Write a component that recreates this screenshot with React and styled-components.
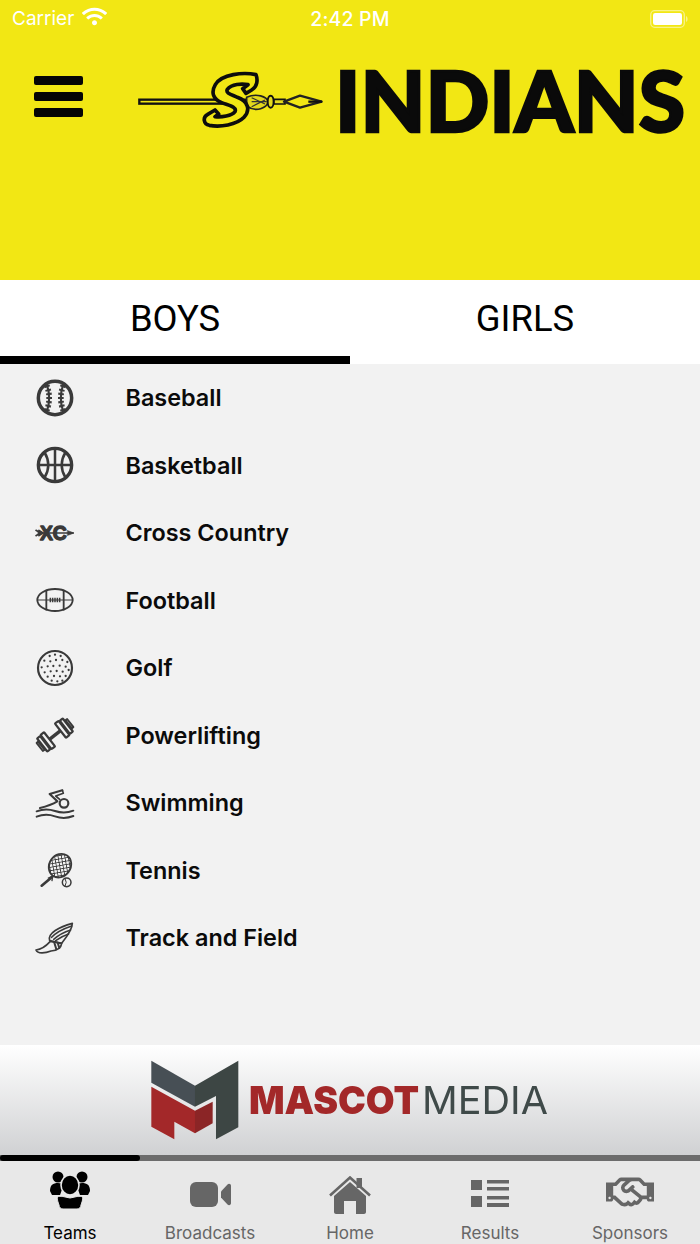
import React from "react";
import styled, { createGlobalStyle } from "styled-components";
import { FaRegHandshake, FaWifi } from "react-icons/fa";

const GlobalStyle = createGlobalStyle`
  html, body { margin: 0; padding: 0; background: #f2f2f2; }
  body { font-family: Inter, "Liberation Sans", sans-serif; }
`;

const INK = "#3a3a3a";

/* list icons are drawn on a 114 unit square centred on 0,0 */
function SportSvg({ children }) {
  return (
    <svg width="38" height="38" viewBox="-57 -57 114 114" fill="none" stroke={INK} strokeLinecap="round" strokeLinejoin="round">
      {children}
    </svg>
  );
}

const BaseballIcon = () => (
  <SportSvg>
    <circle r="50" strokeWidth="10.500" />
    <path d="M-25 -42Q-10 0 -25 42M25 -42Q10 0 25 42" strokeWidth="6.500" />
    <path d="M-25 -38Q-10 0 -25 38M25 -38Q10 0 25 38" strokeWidth="17" strokeLinecap="butt" strokeDasharray="6 6" />
  </SportSvg>
);

const BasketballIcon = () => (
  <SportSvg>
    <circle r="50" strokeWidth="10" />
    <path d="M-50 0H50M0 -50V50M-32 -39Q-8 0 -32 39M32 -39Q8 0 32 39" strokeWidth="7.500" />
  </SportSvg>
);

const CrossCountryIcon = () => (
  <SportSvg>
    <path d="M-50 0H54" strokeWidth="5" />
    <path d="M-57 -8L-44 0L-57 8M-48 -8L-36 0L-48 8" strokeWidth="5" />
    <path d="M38 -7L57 0L38 7Z" fill={INK} strokeWidth="2" />
    <text x="-5" y="21" textAnchor="middle" fontFamily="Liberation Sans, sans-serif" fontWeight="700" fontSize="58" fill={INK} stroke={INK} strokeWidth="4">XC</text>
  </SportSvg>
);

const FootballIcon = () => (
  <SportSvg>
    <ellipse rx="53" ry="33" strokeWidth="5.500" />
    <path d="M-26 -29V29M26 -29V29" strokeWidth="5.500" />
    <path d="M-53 0H53" strokeWidth="3.500" />
    <path d="M-14 -7V7M-7 -7V7M0 -7V7M7 -7V7M14 -7V7" strokeWidth="4.500" strokeLinecap="butt" />
  </SportSvg>
);

const golfDots = [
  [-16, -36], [0, -40], [17, -36], [-32, -22], [-14, -20], [3, -24], [22, -24], [37, -18],
  [-40, -2], [-22, -5], [-5, -6], [14, -7], [32, -4], [-31, 13], [-13, 10], [5, 9], [23, 11], [41, 6],
  [-22, 26], [-3, 24], [15, 25], [32, 24], [-10, 38], [7, 40], [22, 38],
];

const GolfIcon = () => (
  <SportSvg>
    <circle r="51" strokeWidth="6.500" />
    {golfDots.map(([x, y]) => (
      <circle key={`${x}-${y}`} cx={x} cy={y} r="3.400" fill={INK} stroke="none" />
    ))}
  </SportSvg>
);

const PowerliftingIcon = () => (
  <SportSvg>
    <g transform="rotate(-38) scale(1.040)">
      <rect x="-26" y="-5" width="52" height="10" fill={INK} stroke="none" />
      {[-1, 1].map((side) => (
        <g key={side} transform={`scale(${side} 1)`}>
          <rect x="20" y="-26" width="13" height="52" rx="2" fill="#f2f2f2" strokeWidth="6.500" />
          <rect x="36" y="-24" width="11" height="48" rx="2" fill="#f2f2f2" strokeWidth="6.500" />
          <rect x="50" y="-15" width="6" height="30" rx="1" fill="#f2f2f2" strokeWidth="5.500" />
        </g>
      ))}
    </g>
  </SportSvg>
);

const SwimmingIcon = () => (
  <SportSvg>
    <circle cx="27" cy="1" r="13" strokeWidth="6.500" />
    <path d="M-45 15C-25 10 -8 4 7 -5L-16 -27L22 -38" strokeWidth="6.500" />
    <path d="M22 -38L25 -29L2 -21L14 -11" strokeWidth="5" />
    <path d="M-55 25C-35 17 -20 17 0 24S35 31 55 23M-55 41C-35 33 -20 33 0 40S35 47 55 39" strokeWidth="6" />
  </SportSvg>
);

const TennisIcon = () => (
  <SportSvg>
    <defs>
      <pattern id="racketWeave" width="10" height="10" patternUnits="userSpaceOnUse" patternTransform="rotate(45)">
        <path d="M0 0H10M0 0V10" stroke={INK} strokeWidth="5" />
      </pattern>
    </defs>
    <ellipse cx="15" cy="-13" rx="32" ry="37" transform="rotate(35 15 -13)" fill="url(#racketWeave)" strokeWidth="5.500" />
    <path d="M-8 20L-40 47" strokeWidth="8" />
    <path d="M-7 18L-20 24M-7 18L-9 32" strokeWidth="4" />
    <circle cx="35" cy="37" r="13" strokeWidth="4.500" />
    <path d="M30 25Q38 37 30 49" strokeWidth="3" />
  </SportSvg>
);

const TrackIcon = () => (
  <SportSvg>
    <path d="M-57 36C-40 34 -25 22 -14 10L20 16C18 32 2 38 -12 39C-30 46 -52 48 -57 36Z" strokeWidth="5" />
    <path d="M-16 8C-24 -14 14 -34 52 -44C52 -26 36 -4 20 16Z" strokeWidth="5" />
    <path d="M-10 -2C6 -20 26 -28 50 -36M-4 4C12 -10 28 -18 47 -24M2 8C16 -2 28 -8 41 -12" strokeWidth="4.500" />
    <path d="M-2 14L4 34M8 14L13 30" strokeWidth="6" />
  </SportSvg>
);

const boysTeams = [
  { name: "Baseball", Icon: BaseballIcon },
  { name: "Basketball", Icon: BasketballIcon },
  { name: "Cross Country", Icon: CrossCountryIcon },
  { name: "Football", Icon: FootballIcon },
  { name: "Golf", Icon: GolfIcon },
  { name: "Powerlifting", Icon: PowerliftingIcon },
  { name: "Swimming", Icon: SwimmingIcon },
  { name: "Tennis", Icon: TennisIcon },
  { name: "Track and Field", Icon: TrackIcon },
];

const TeamsGlyph = () => (
  <svg width="40" height="39" viewBox="0 0 40 39" fill="currentColor">
    <circle cx="8" cy="7" r="5.500" />
    <circle cx="32" cy="7" r="5.500" />
    <path d="M0 21C0 15 3 13 8 13L14 14L10 25L2 25Z" />
    <path d="M40 21C40 15 37 13 32 13L26 14L30 25L38 25Z" />
    <ellipse cx="20" cy="15" rx="9" ry="10" stroke="#e8e8e8" strokeWidth="1.600" />
    <path d="M9 35C5 24 9 27 13 26.500L20 28L27 26.500C31 27 35 24 31 35C31 37.500 29 39 27 39H13C11 39 9 37.500 9 35Z" stroke="#e8e8e8" strokeWidth="1" />
  </svg>
);

const VideoGlyph = () => (
  <svg width="41" height="25" viewBox="0 0 41 25" fill="currentColor">
    <rect x="0" y="0" width="28" height="25" rx="6" />
    <path d="M31 9.500L37.500 2.500C39 1.200 41 2 41 4V21C41 23 39 23.800 37.500 22.500L31 15.500Z" />
  </svg>
);

const HomeGlyph = () => (
  <svg width="42" height="38" viewBox="0 0 42 38" fill="currentColor">
    <path d="M27.500 2H33V12H27.500Z" />
    <path d="M1 19.500L21 1.500L41 19.500" fill="none" stroke="currentColor" strokeWidth="2.600" />
    <path d="M5 20L21 6L37 20V36C37 37 36 38 35 38H27V25H15V38H7C6 38 5 37 5 36Z" />
  </svg>
);

const ResultsGlyph = () => (
  <svg width="38" height="27" viewBox="0 0 38 27" fill="currentColor">
    <path d="M0 0H11V10H0ZM0 16H11V27H0ZM16 0H38V3.500H16ZM16 7H38V10.500H16ZM16 16H38V19.500H16ZM16 23H38V27H16Z" />
  </svg>
);

// $pad nudges a glyph inside its box, since the icons don't share one centre line
const tabs = [
  { label: "Teams", glyph: <TeamsGlyph />, active: true, pad: "0 0 5px" },
  { label: "Broadcasts", glyph: <VideoGlyph />, pad: "5px 0 0" },
  { label: "Home", glyph: <HomeGlyph />, pad: "5px 0 0" },
  { label: "Results", glyph: <ResultsGlyph />, pad: "3px 0 0" },
  { label: "Sponsors", glyph: <FaRegHandshake size={48} />, pad: "0" },
];

function BatteryIcon() {
  return (
    <svg width="38" height="18" viewBox="0 0 38 18" fill="none">
      <rect x="0.700" y="0.700" width="33.600" height="16.600" rx="4" stroke="#fff" strokeOpacity="0.5" strokeWidth="1.300" />
      <rect x="3" y="3" width="29" height="12" rx="2.200" fill="#fff" />
      <path d="M36 6C37 6.500 37.600 7.500 37.600 9C37.600 10.500 37 11.500 36 12Z" fill="#fff" fillOpacity="0.5" />
    </svg>
  );
}

const S_SHAPE =
  "M408 44C414 60 412 80 395 90L378 100L368 86L384 74C365 70 335 72 322 88C316 100 335 104 352 112C385 124 392 150 372 172C350 195 300 202 268 196C250 192 248 172 262 164L285 150L296 162L285 170C305 172 335 168 345 155C352 140 325 136 305 128C280 118 272 98 286 74C305 42 370 36 408 44Z";

function SpearLogo() {
  return (
    <LogoSvg width="550" height="72" viewBox="0 0 550 72">
      <g transform="translate(-17 -4) scale(0.3333)">
        <rect x="58" y="119" width="320" height="12" fill="#f2e714" stroke="#111" strokeWidth="7" />
        <path d="M380 112C410 98 440 110 445 125C440 142 410 160 380 138Z" fill="#e2d81c" stroke="#222" strokeWidth="5" />
        <path d="M395 125H440M395 113L435 132M395 140L435 120" stroke="#333" strokeWidth="3.500" fill="none" />
        <ellipse cx="452" cy="125" rx="9" ry="18" fill="#e6dc1c" stroke="#111" strokeWidth="6" />
        <path d="M462 118H495V132H462Z" fill="#e6dc1c" stroke="#111" strokeWidth="5" />
        <path d="M492 125L540 107L605 125L540 143Z" fill="#f2e714" stroke="#222" strokeWidth="7" strokeLinejoin="round" />
        <path d="M565 125H606" stroke="#111" strokeWidth="7" />
        <path d={S_SHAPE} fill="#f2e714" stroke="#0d0d0d" strokeWidth="11" strokeLinejoin="round" />
      </g>
      <IndiansText x="198" y="68" textLength="350" lengthAdjust="spacingAndGlyphs" fontSize="84">INDIANS</IndiansText>
    </LogoSvg>
  );
}

function MascotLogo() {
  return (
    <LogoSvg width="400" height="80" viewBox="0 0 400 80">
      <g transform="translate(-20 -20) scale(0.3333)">
        <path d="M64 62L195 137V200L64 128Z" fill="#474f55" />
        <path d="M195 137L325 62V262L258 298V168L195 200Z" fill="#3d4644" />
        <path d="M64 140L195 212V280L133 245V298L64 260Z" fill="#a32829" />
        <path d="M195 212L248 185V250L195 280Z" fill="#8b2526" />
      </g>
      <MascotWord x="99" y="54" textLength="170" lengthAdjust="spacingAndGlyphs" fontSize="38.500" fontWeight="900" fill="#a32829">MASCOT</MascotWord>
      <MascotWord x="272" y="54" textLength="126" lengthAdjust="spacingAndGlyphs" fontSize="38.500" fontWeight="400" fill="#3f4a49">MEDIA</MascotWord>
    </LogoSvg>
  );
}

export default function App() {
  return (
    <Page>
      <GlobalStyle />
      <Header>
        <StatusBar>
          <Carrier>
            Carrier <FaWifi size={25} />
          </Carrier>
          <Clock>2:42 PM</Clock>
          <BatteryIcon />
        </StatusBar>
        <Brand>
          <MenuButton aria-label="Menu">
            <span />
            <span />
            <span />
          </MenuButton>
          <SpearLogo />
        </Brand>
      </Header>

      <Tabs>
        <Tab $active>BOYS</Tab>
        <Tab>GIRLS</Tab>
      </Tabs>

      <TeamList>
        {boysTeams.map(({ name, Icon }) => (
          <TeamRow key={name}>
            <IconSlot>
              <Icon />
            </IconSlot>
            <TeamName>{name}</TeamName>
          </TeamRow>
        ))}
      </TeamList>

      <Banner>
        <MascotLogo />
      </Banner>
      <ProgressTrack>
        <ProgressFill />
      </ProgressTrack>

      <TabBar>
        {tabs.map((tab) => (
          <TabItem key={tab.label} $active={tab.active}>
            <TabGlyphBox $pad={tab.pad}>{tab.glyph}</TabGlyphBox>
            <TabLabel>{tab.label}</TabLabel>
          </TabItem>
        ))}
      </TabBar>
    </Page>
  );
}

const Page = styled.div`
  width: 700px;
  height: 1244px;
  display: flex;
  flex-direction: column;
  overflow: hidden;
  background: #f2f2f2;
`;

const Header = styled.header`
  height: 280px;
  flex: none;
  background: #f2e714;
`;

const StatusBar = styled.div`
  height: 37px;
  padding: 0 12px;
  display: grid;
  grid-template-columns: 1fr auto 1fr;
  align-items: center;
  color: #fff;
  font-size: 19px;
  & > svg {
    justify-self: end;
  }
`;

const Carrier = styled.div`
  display: flex;
  align-items: center;
  gap: 8px;
  font-weight: 400;
  & svg {
    margin-top: -4px;
  }
`;

const Clock = styled.div`
  font-weight: 500;
  font-size: 19.500px;
  letter-spacing: 0.2px;
`;

const Brand = styled.div`
  display: flex;
  align-items: flex-start;
  padding: 27px 0 0 34px;
`;

const MenuButton = styled.div`
  width: 49px;
  height: 41px;
  margin: 12px 54px 0 0;
  flex: none;
  display: flex;
  flex-direction: column;
  justify-content: space-between;
  & span {
    height: 9px;
    border-radius: 2px;
    background: #050505;
  }
`;

const LogoSvg = styled.svg`
  flex: none;
  display: block;
  overflow: visible;
  filter: blur(0.4px);
`;

const IndiansText = styled.text`
  font-family: Lato, Inter, sans-serif;
  font-weight: 900;
  fill: #0a0a0a;
  stroke: #0a0a0a;
  stroke-width: 2.500px;
`;

const MascotWord = styled.text`
  font-family: Inter, Lato, sans-serif;
`;

const Tabs = styled.nav`
  height: 84px;
  flex: none;
  display: flex;
  background: #fff;
`;

const Tab = styled.div`
  flex: 1;
  display: flex;
  align-items: center;
  justify-content: center;
  box-sizing: border-box;
  border-bottom: 8px solid ${(p) => (p.$active ? "#000" : "transparent")};
  font-family: Roboto, "Liberation Sans", sans-serif;
  font-size: 36.400px;
  color: #000;
`;

const TeamList = styled.ul`
  flex: 1;
  margin: 0;
  padding: 0;
  list-style: none;
  background: #f2f2f2;
`;

const TeamRow = styled.li`
  height: 67.500px;
  display: flex;
  align-items: center;
  padding-left: 35.500px;
`;

const IconSlot = styled.div`
  width: 38px;
  height: 38px;
  flex: none;
  margin-right: 52px;
  & svg {
    display: block;
    overflow: visible;
  }
`;

const TeamName = styled.span`
  font-size: 23.400px;
  font-weight: 600;
  color: #0b0b0b;
`;

const Banner = styled.div`
  height: 110px;
  flex: none;
  display: flex;
  align-items: center;
  justify-content: center;
  background: linear-gradient(#ffffff, #d0d1d3);
`;

const ProgressTrack = styled.div`
  height: 6px;
  flex: none;
  background: #6c6c6c;
`;

const ProgressFill = styled.div`
  width: 20%;
  height: 100%;
  border-radius: 3px;
  background: #000;
`;

const TabBar = styled.footer`
  height: 83px;
  flex: none;
  display: grid;
  grid-template-columns: repeat(5, 1fr);
  background: #e8e8e8;
`;

const TabItem = styled.div`
  display: flex;
  flex-direction: column;
  align-items: center;
  color: ${(p) => (p.$active ? "#000" : "#666")};
`;

const TabGlyphBox = styled.div`
  height: 62px;
  padding: ${(p) => p.$pad};
  box-sizing: border-box;
  display: flex;
  align-items: center;
  justify-content: center;
`;

const TabLabel = styled.span`
  font-size: 17px;
  line-height: 20px;
`;
